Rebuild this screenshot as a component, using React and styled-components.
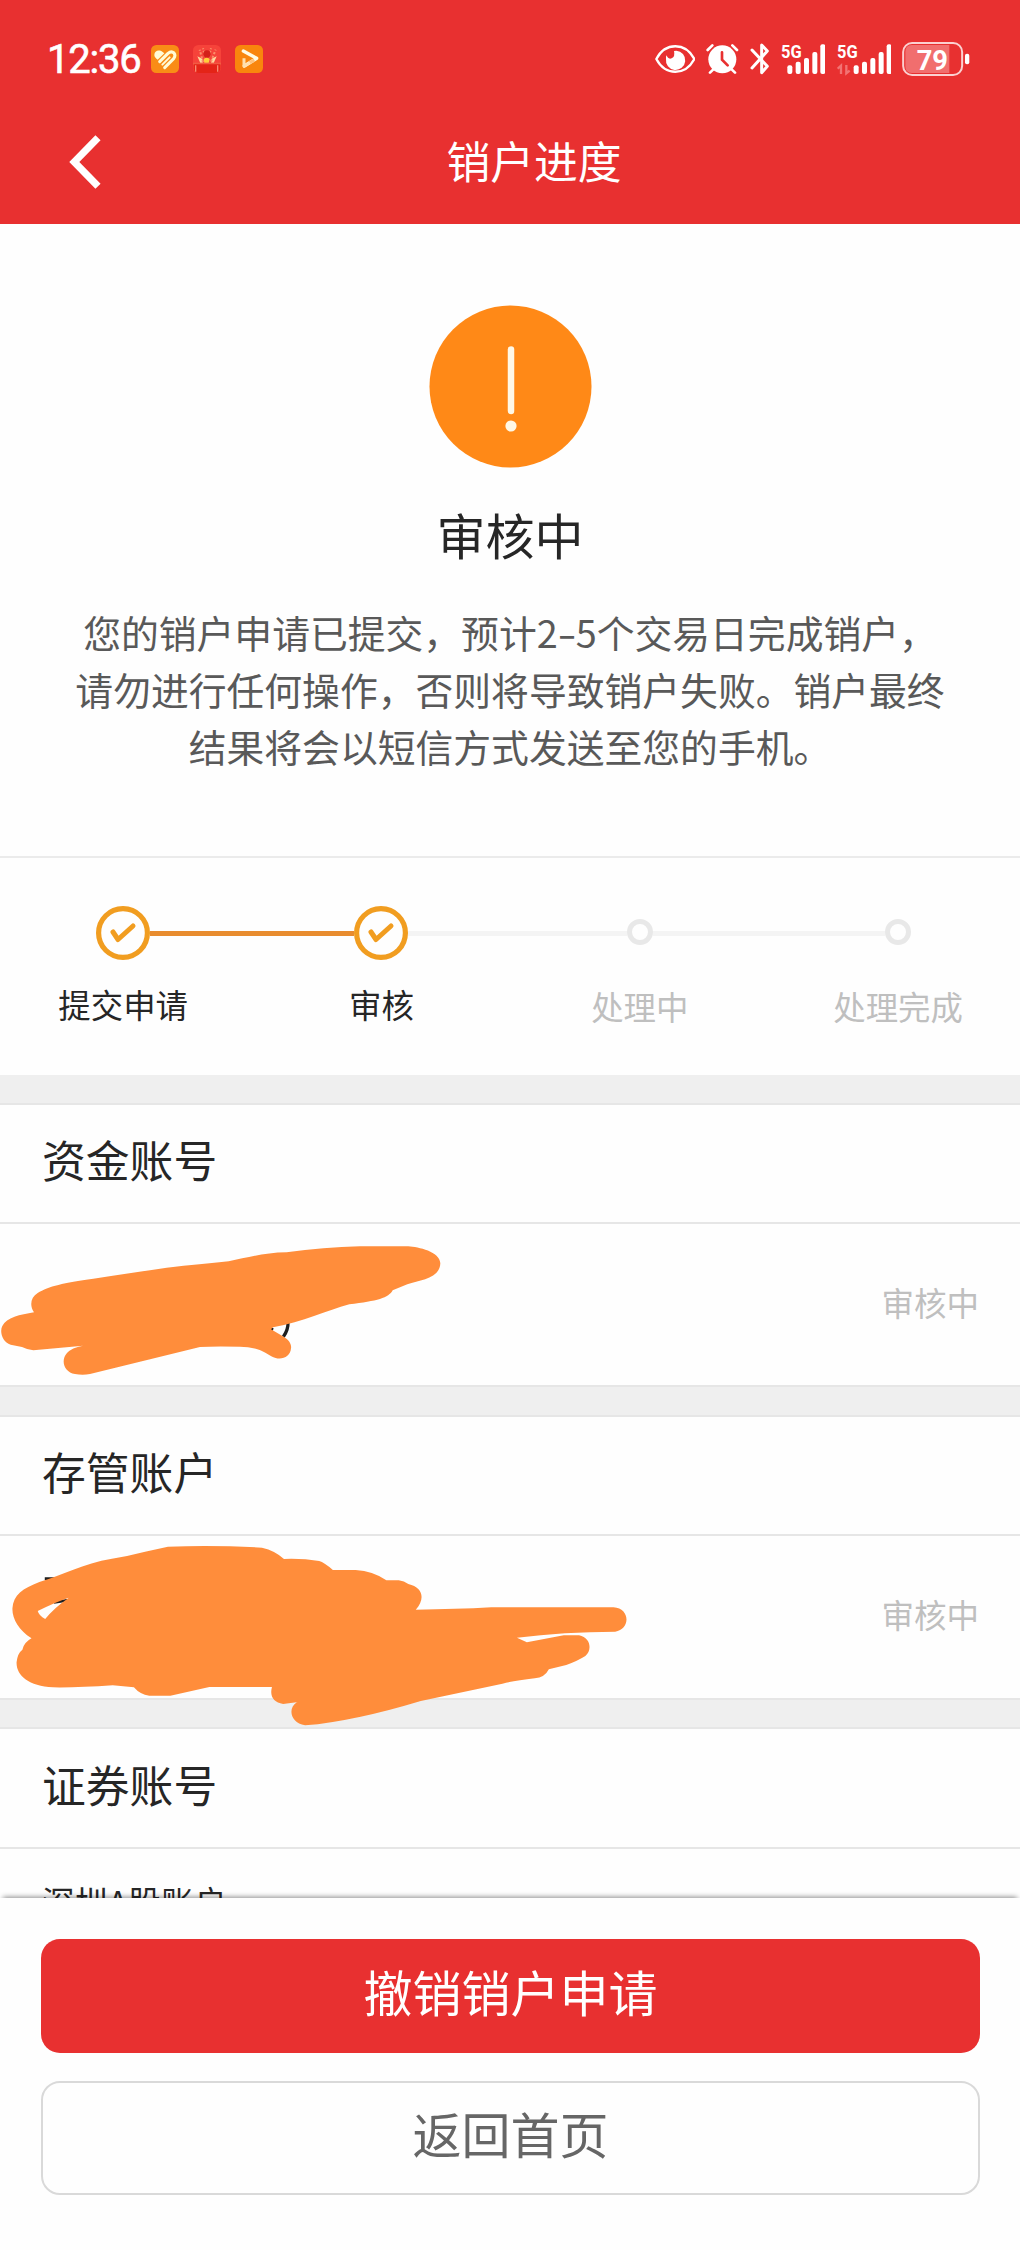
import React from 'react';
import styled, { createGlobalStyle } from 'styled-components';

const GlobalStyle = createGlobalStyle`
  * { box-sizing: border-box; }
  body {
    margin: 0;
    background: #fefefe;
    font-family: "Noto Sans CJK SC", "Noto Sans", sans-serif;
    color: #262626;
  }
`;

const Screen = styled.div`
  width: 1020px;
  height: 2250px;
  overflow: hidden;
  display: flex;
  flex-direction: column;
  background: #fefefe;
`;

const Header = styled.header`
  flex: none;
  height: 224px;
  background: #e83030;
  color: #fff;
`;

const StatusBar = styled.div`
  height: 118px;
  padding: 40px 49.5px 0 47px;
  display: flex;
  justify-content: space-between;
`;

const StatusGroup = styled.div`
  display: flex;
  height: 37px;
  align-items: center;
  gap: ${(p) => p.$gap || 0}px;
`;

const Clock = styled.span`
  width: 104px;
  padding-top: 2px;
  font: 400 40px/40px Roboto, sans-serif;
  letter-spacing: -1.2px;
  white-space: nowrap;
  -webkit-text-stroke: 0.6px #fff;
`;

const Glyph = styled.svg`
  display: block;
  flex: none;
  margin-left: ${(p) => p.$ml || 0}px;
`;

const NavBar = styled.div`
  height: 86px;
  padding: 0 18px 0 66px;
  display: grid;
  grid-template-columns: 38px 1fr 38px;
  align-items: center;
`;

const BackButton = styled.button`
  border: 0;
  padding: 4px 0 0;
  background: none;
`;

const NavTitle = styled.h1`
  margin: 0;
  padding-bottom: 3px;
  font-size: 43.8px;
  line-height: 60px;
  font-weight: 400;
  text-align: center;
`;

const Hero = styled.section`
  flex: none;
  height: 634px;
  padding-top: 81px;
  display: flex;
  flex-direction: column;
  align-items: center;
  border-bottom: 2px solid #ebebeb;
`;

const HeroTitle = styled.h2`
  margin: 31px 0 0;
  font-size: 49px;
  line-height: 70px;
  font-weight: 400;
`;

const HeroText = styled.p`
  margin: 34px 0 0;
  font-size: 37.8px;
  line-height: 57px;
  text-align: center;
  color: #595959;
  white-space: nowrap;
`;

const Hyphen = styled.span`
  display: inline-block;
  width: 18px;
  transform: scaleX(1.45);
`;

const Steps = styled.section`
  flex: none;
  height: 217px;
  display: grid;
  grid-template-columns: repeat(4, 258.3px);
  margin-left: -6px;
`;

const Step = styled.div`
  display: flex;
  flex-direction: column;
  align-items: center;
  padding-top: 47px;
`;

const Track = styled.div`
  width: 100%;
  height: 55px;
  display: grid;
  grid-template-columns: 1fr auto 1fr;
  align-items: center;
`;

const Rail = styled.i`
  height: 5px;
  margin-top: 1px;
  background: ${(p) => (p.$state === 'on' ? '#e88c2f' : p.$state === 'off' ? '#f4f4f4' : 'transparent')};
`;

const Dot = styled.span`
  width: 26px;
  height: 26px;
  margin-top: -2px;
  border: 5px solid #e8e8e8;
  border-radius: 50%;
`;

const StepLabel = styled.span`
  margin-top: ${(p) => (p.$done ? 20 : 22)}px;
  font-size: 32.4px;
  line-height: 48px;
  color: ${(p) => (p.$done ? '#262626' : '#bfbfbf')};
`;

const Account = styled.section`
  flex: none;
`;

const Gap = styled.div`
  height: ${(p) => p.$h}px;
  background: #efefef;
`;

const AccountTitle = styled.h3`
  margin: 0;
  height: ${(p) => p.$h}px;
  padding: 0 42px 9px;
  border-top: 2px solid #e6e6e6;
  border-bottom: 2px solid #e6e6e6;
  display: flex;
  align-items: center;
  font-size: 43.8px;
  font-weight: 400;
`;

const AccountRow = styled.div`
  position: relative;
  height: ${(p) => p.$h}px;
  padding: 0 41px ${(p) => p.$h - 157}px 42px;
  border-bottom: 2px solid #e6e6e6;
  display: flex;
  align-items: center;
  justify-content: flex-end;
  font-size: 32.5px;
  color: #bfbfbf;
`;

const AccountName = styled.span`
  align-self: flex-start;
  margin-right: auto;
  padding-top: 28px;
  line-height: 48px;
  letter-spacing: 0.5px;
  color: #262626;
`;

const Scribble = styled.svg`
  position: absolute;
  left: 0;
  top: 0;
  z-index: 1;
`;

const Footer = styled.footer`
  position: absolute;
  left: 0;
  top: 1898px;
  width: 1020px;
  height: 352px;
  padding: 41px 40px 0 41px;
  display: flex;
  flex-direction: column;
  gap: 28px;
  background: #fefefe;
  box-shadow: 0 -4px 5px -3px rgba(0, 0, 0, 0.45);
  z-index: 2;
`;

const Action = styled.button`
  height: 114px;
  padding: 0 0 11px;
  border: ${(p) => (p.$primary ? '0' : '2px solid #d9d9d9')};
  border-radius: 19px;
  background: ${(p) => (p.$primary ? '#e83030' : '#fefefe')};
  color: ${(p) => (p.$primary ? '#fff' : '#666')};
  font-family: inherit;
  font-size: 49px;
`;

const HeartApp = () => (
  <Glyph width="28" height="28" viewBox="0 0 84 84">
    <rect width="84" height="84" rx="16" fill="#f98c16" />
    <path d="M10 30 C10 17 24 12 35 21 L40 25 L20 44 C13 39 10 35 10 30 Z" fill="#fffbd6" />
    <path d="M26 50 L51 25 Q61 17 69 24 Q75 31 68 41 L41 68" fill="none" stroke="#fffbd6" strokeWidth="9" strokeLinecap="round" strokeLinejoin="round" />
    <path d="M34 59 L56 37" stroke="#fffbd6" strokeWidth="6" strokeLinecap="round" />
  </Glyph>
);

const GiftApp = () => (
  <Glyph width="28" height="28" viewBox="0 0 84 84">
    <rect width="84" height="84" rx="16" fill="#f6433a" />
    <path d="M22 54 L13 34 L28 41 L30 53 M62 54 L71 34 L56 41 L54 53" fill="#ffd9a0" />
    <path d="M30 52 L20 14 M36 36 L30 10 M48 36 L54 10 M54 50 L68 14" stroke="#fb8f6a" strokeWidth="6" strokeDasharray="7 5" />
    <circle cx="42" cy="27" r="11" fill="#d32019" />
    <path d="M32 42 Q41 35 50 42 L47 54 H34 Z" fill="#ffcf3b" />
    <path d="M0 53 H84 V60 H0 Z" fill="#f25a43" />
    <path d="M2 58 H82 V70 Q82 84 66 84 H18 Q2 84 2 70 Z" fill="#e42417" />
    <path d="M8 61 V80 M74 61 V80" stroke="#f98a72" strokeWidth="4" />
  </Glyph>
);

const PlayApp = () => (
  <Glyph width="28" height="28" viewBox="0 0 84 84">
    <rect width="84" height="84" rx="16" fill="#f9860d" />
    <path d="M25 18 L65 40 L28 63" fill="none" stroke="#fffbe4" strokeWidth="10" strokeLinejoin="round" strokeLinecap="round" />
    <path d="M27 40 V63 L44 54" fill="none" stroke="#ffe0ae" strokeWidth="9" strokeLinejoin="round" />
    <path d="M44 53 L58 45" stroke="#ffc27c" strokeWidth="10" />
  </Glyph>
);

const Eye = () => (
  <Glyph width="40.7" height="36.7" viewBox="44 60 122 110">
    <path d="M48 117 C75 66 135 66 162 117 C135 168 75 168 48 117 Z" fill="none" stroke="#fff" strokeWidth="7" strokeLinejoin="round" />
    <path d="M108 92 A29 29 0 1 1 77 117 Q76 110 79 106 Q83 119 94 115 Q105 109 101 93 Z" fill="#fff" />
  </Glyph>
);

const Alarm = () => (
  <Glyph $ml={11} width="33" height="36.7" viewBox="200 60 99 110">
    <circle cx="249" cy="118" r="42" fill="#fff" />
    <path d="M205 90 L219 76 M293 90 L279 76 M212 158 L222 148 M287 158 L277 148" stroke="#fff" strokeWidth="8" strokeLinecap="round" />
    <path d="M248 97 V119 L265 136" fill="none" stroke="#e83030" strokeWidth="8" strokeLinecap="round" />
  </Glyph>
);

const Bluetooth = () => (
  <Glyph $ml={10.2} width="20" height="36.7" viewBox="329 60 60 110">
    <path d="M335 90 L381 139 L364 158 V75 L381 93 L335 144" fill="none" stroke="#fff" strokeWidth="9" strokeLinejoin="round" strokeLinecap="round" />
  </Glyph>
);

const bars = [
  [0, 136],
  [25, 125],
  [50, 114],
  [75, 96],
  [99, 73],
];

const Signal = ({ x, barX, width, ml, data }) => (
  <Glyph $ml={ml} width={width / 3} height="36.7" viewBox={`${x} 60 ${width} 110`}>
    <text x={x} y="114" fill="#fff" fontFamily="Roboto, sans-serif" fontWeight="700" fontSize="56" textLength="62" lengthAdjust="spacingAndGlyphs">5G</text>
    {bars.map(([dx, y]) => (
      <rect key={dx} x={barX + dx} y={y} width="15" height={162 - y} rx="6" fill="#fff" />
    ))}
    {data && <path d="M592 146 L602 137 V162 M628 152 L618 160 V135" fill="none" stroke="#f27373" strokeWidth="7" />}
  </Glyph>
);

const Battery = () => (
  <Glyph $ml={11} width="68.3" height="36.7" viewBox="786 60 205 110">
    <path d="M928 75 H815 Q796 75 796 96 V138 Q796 159 815 159 H928 Z" fill="#f16e6e" />
    <rect x="789.5" y="69" width="177" height="96" rx="27" fill="none" stroke="#fbd0d0" strokeWidth="6" />
    <rect x="975" y="101" width="13" height="32" rx="6" fill="#fff" />
    <text x="877" y="149" textAnchor="middle" fill="#fff" fontFamily="Roboto, sans-serif" fontWeight="700" fontSize="82">79</text>
  </Glyph>
);

const CheckMark = () => (
  <svg width="54" height="54" viewBox="0 0 54 54">
    <circle cx="27" cy="27" r="24.4" fill="#fefefe" stroke="#f19d20" strokeWidth="5.2" />
    <path d="M17 26 L22 33.5 L37 20" fill="none" stroke="#f19d20" strokeWidth="5" strokeLinecap="round" strokeLinejoin="round" />
  </svg>
);

const steps = [
  { label: '提交申请', done: true, before: 'none', after: 'on' },
  { label: '审核', done: true, before: 'on', after: 'off' },
  { label: '处理中', done: false, before: 'off', after: 'off' },
  { label: '处理完成', done: false, before: 'off', after: 'none' },
];

const FundScribble = () => (
  <Scribble width="510" height="160" viewBox="0 342 1530 480">
    <path d="M864 636 Q865 660 850 680 M809 655 L819 660" fill="none" stroke="#1f1f1f" strokeWidth="10" />
    <path
      fill="#ff8d3b"
      d="M102 607 C88 586 92 562 113 549 C147 528 190 519 280 506 Q400 488 500 473 C570 465 630 461 686 454 C740 443 790 428 860 427 Q970 412 1080 409 H1225 C1255 411 1320 425 1321 460 C1320 505 1262 510 1222 523 L1178 541 C1166 564 1132 573 1048 583 C980 602 910 635 819 652 L813 658 L851 680 C869 691 875 704 873 715 C872 738 849 750 827 744 C810 739 792 723 777 719 Q748 710 720 710 Q640 708 600 711 L270 792 Q248 796 225 792 C192 787 181 751 201 729 Q215 713 249 707 L100 721 Q82 719 66 711 L32 704 C7 697 -2 665 7 648 C20 622 60 614 102 607 Z"
    />
  </Scribble>
);

const CustodyScribble = () => (
  <Scribble width="650" height="204" viewBox="0 408 1568 612" preserveAspectRatio="none">
    <path d="M108 536 H140 M130 607 L162 601" fill="none" stroke="#1f1f1f" strokeWidth="8" />
    <path
      fill="#ff8d3b"
      fillRule="evenodd"
      d="M76 715 C45 690 29 655 30 625 C32 585 55 565 95 546 C150 526 200 490 270 476 Q310 468 350 455 L405 440 Q520 435 632 443 Q664 452 685 477 Q730 475 770 483 Q782 487 803 510 H858 Q900 513 932 541 H962 Q975 543 985 552 C1021 562 1026 597 1003 629 Q1100 628 1185 622 H1480 C1521 625 1521 689 1484 695 Q1360 695 1247 713 L1271 727 L1360 706 H1397 C1425 713 1429 750 1412 768 Q1393 783 1366 795 L1324 808 Q1314 833 1290 835 Q1240 842 1212 851 L1015 903 Q930 935 870 950 Q795 970 736 976 C701 969 693 925 716 907 L724 905 L683 912 C660 907 650 890 656 861 H505 L411 887 H360 Q338 884 323 862 L272 856 Q190 863 128 862 C69 858 39 826 40 787 Q42 760 54 749 Q58 727 76 715 Z M91 633 Q94 647 109 657 Q130 624 166 593 Q132 607 91 633 Z"
    />
  </Scribble>
);

export default function App() {
  return (
    <Screen>
      <GlobalStyle />
      <Header>
        <StatusBar>
          <StatusGroup>
            <Clock>12:36</Clock>
            <StatusGroup $gap={14}>
              <HeartApp />
              <GiftApp />
              <PlayApp />
            </StatusGroup>
          </StatusGroup>
          <StatusGroup>
            <Eye />
            <Alarm />
            <Bluetooth />
            <Signal x={422} barX={441} width={134} ml={11} />
            <Signal x={590} barX={640} width={164} ml={11.3} data />
            <Battery />
          </StatusGroup>
        </StatusBar>
        <NavBar>
          <BackButton aria-label="返回">
            <svg width="38" height="60" viewBox="66 133 38 60">
              <path d="M98 138.7 L74.3 163 L98 187.3" fill="none" stroke="#fff" strokeWidth="7.2" />
            </svg>
          </BackButton>
          <NavTitle>销户进度</NavTitle>
        </NavBar>
      </Header>
      <Hero>
        <svg width="163" height="163" viewBox="0 0 163 163">
          <circle cx="81.5" cy="81.5" r="81" fill="#ff8917" />
          <path d="M82 44.5 V106" stroke="#fff8e6" strokeWidth="6.5" strokeLinecap="round" />
          <circle cx="82" cy="121" r="5.6" fill="#fff8e6" />
        </svg>
        <HeroTitle>审核中</HeroTitle>
        <HeroText>
          您的销户申请已提交，预计2<Hyphen>-</Hyphen>5个交易日完成销户，
          <br />
          请勿进行任何操作，否则将导致销户失败。销户最终
          <br />
          结果将会以短信方式发送至您的手机。
        </HeroText>
      </Hero>
      <Steps>
        {steps.map((s) => (
          <Step key={s.label}>
            <Track>
              <Rail $state={s.before} />
              {s.done ? <CheckMark /> : <Dot />}
              <Rail $state={s.after} />
            </Track>
            <StepLabel $done={s.done}>{s.label}</StepLabel>
          </Step>
        ))}
      </Steps>
      <Account>
        <Gap $h={28} />
        <AccountTitle $h={121}>资金账号</AccountTitle>
        <AccountRow $h={163}>
          <FundScribble />
          审核中
        </AccountRow>
      </Account>
      <Account>
        <Gap $h={28} />
        <AccountTitle $h={121}>存管账户</AccountTitle>
        <AccountRow $h={164}>
          <CustodyScribble />
          审核中
        </AccountRow>
      </Account>
      <Account>
        <Gap $h={27} />
        <AccountTitle $h={122}>证券账号</AccountTitle>
        <AccountRow $h={163}>
          <AccountName>深圳A股账户</AccountName>
        </AccountRow>
      </Account>
      <Footer>
        <Action $primary>撤销销户申请</Action>
        <Action>返回首页</Action>
      </Footer>
    </Screen>
  );
}
